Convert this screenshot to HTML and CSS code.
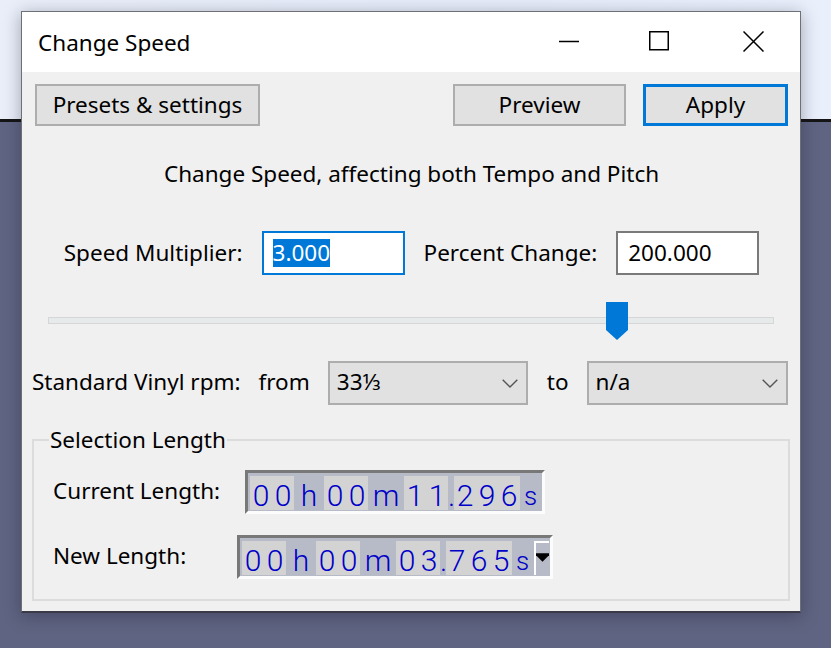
FILE: index.html
```html
<!DOCTYPE html>
<html>
<head>
<meta charset="utf-8">
<link rel="stylesheet" href="styles.css">
</head>
<body>
<div class="desktop">
  <div class="sky"></div>
  <div class="rule"></div>
  <div class="ground"></div>
</div>

<div class="window">
  <div class="titlebar">
    <div class="title">Change Speed</div>
    <div class="caption">
      <div class="cap cap-min"><svg width="20" height="20" viewBox="0 0 20 20"><line x1="0" y1="10.5" x2="20" y2="10.5" stroke="#000" stroke-width="1.5"/></svg></div>
      <div class="cap cap-max"><svg width="20" height="20" viewBox="0 0 20 20"><rect x="0.75" y="0.75" width="18.5" height="18" fill="none" stroke="#000" stroke-width="1.5"/></svg></div>
      <div class="cap cap-close"><svg width="21" height="21" viewBox="0 0 21 21"><path d="M0.5 0.5 L20.5 20.5 M20.5 0.5 L0.5 20.5" stroke="#000" stroke-width="1.5" fill="none"/></svg></div>
    </div>
  </div>

  <div class="client">
    <div class="toolbar">
      <div class="btn btn-presets">Presets &amp; settings</div>
      <div class="btn btn-preview">Preview</div>
      <div class="btn btn-apply">Apply</div>
    </div>

    <div class="heading">Change Speed, affecting both Tempo and Pitch</div>

    <div class="mult-row">
      <span class="lbl">Speed Multiplier:</span>
      <div class="field field-focus"><span class="sel">3.000</span></div>
      <span class="lbl">Percent Change:</span>
      <div class="field">200.000</div>
    </div>

    <div class="slider">
      <div class="track"></div>
      <svg class="thumb" width="22" height="38" viewBox="0 0 22 38"><path d="M0 0 H22 V28 L11 38 L0 28 Z" fill="#0078d7"/></svg>
    </div>

    <div class="vinyl-row">
      <span class="lbl">Standard Vinyl rpm:</span>
      <span class="lbl">from</span>
      <div class="combo combo-from"><span>33⅓</span><svg class="chev" width="16" height="9" viewBox="0 0 16 9"><path d="M0.7 0.7 L8 8 L15.3 0.7" fill="none" stroke="#555" stroke-width="1.4"/></svg></div>
      <span class="lbl">to</span>
      <div class="combo combo-to"><span>n/a</span><svg class="chev" width="16" height="9" viewBox="0 0 16 9"><path d="M0.7 0.7 L8 8 L15.3 0.7" fill="none" stroke="#555" stroke-width="1.4"/></svg></div>
    </div>

    <fieldset class="group">
      <legend>Selection Length</legend>
      <div class="len-row">
        <span class="lbl len-lbl-cur">Current Length:</span>
        <div class="tc">
          <span class="dg2"><span class="d">0</span><span class="d">0</span></span>
          <span class="u u-h">h</span>
          <span class="dg2"><span class="d">0</span><span class="d">0</span></span>
          <span class="u u-m">m</span>
          <span class="dg2"><span class="d">1</span><span class="d">1</span></span>
          <span class="u u-dot">.</span>
          <span class="dg3"><span class="d">2</span><span class="d">9</span><span class="d">6</span></span>
          <span class="u u-s">s</span>
        </div>
      </div>
      <div class="len-row len-row-new">
        <span class="lbl len-lbl-new">New Length:</span>
        <div class="tc">
          <span class="dg2"><span class="d">0</span><span class="d">0</span></span>
          <span class="u u-h">h</span>
          <span class="dg2"><span class="d">0</span><span class="d">0</span></span>
          <span class="u u-m">m</span>
          <span class="dg2"><span class="d">0</span><span class="d">3</span></span>
          <span class="u u-dot">.</span>
          <span class="dg3"><span class="d">7</span><span class="d">6</span><span class="d">5</span></span>
          <span class="u u-s u-s-new">s</span>
          <span class="tc-drop"><svg width="14" height="10" viewBox="0 0 14 10"><path d="M0 0 H14 V2 L7 9 L0 2 Z" fill="#000"/></svg></span>
        </div>
      </div>
    </fieldset>
  </div>
</div>
</body>
</html>
```

FILE: styles.css
```css
html, body {
  margin: 0;
  padding: 0;
  width: 831px;
  height: 648px;
  overflow: hidden;
}

body {
  font-family: "Noto Sans", "Open Sans", sans-serif;
  font-size: 22.5px;
  color: #000;
}

.desktop {
  display: flex;
  flex-direction: column;
  height: 648px;
}

.sky {
  height: 119px;
  background: linear-gradient(90deg, #e9eef9 0%, #e6ecf9 60%, #e9effb 100%);
}

.rule {
  height: 3px;
  background: #151515;
}

.ground {
  flex: 1;
  background: #5f6482;
}

.window {
  position: absolute;
  left: 21px;
  top: 11px;
  width: 778px;
  height: 599px;
  border: 1px solid #6d7077;
  border-bottom: 2px solid #3a3b46;
  background: #f0f0f0;
  box-shadow: 0 3px 16px rgba(20, 22, 40, 0.35);
  display: flex;
  flex-direction: column;
}

/* title bar */
.titlebar {
  height: 60px;
  background: #fff;
  display: flex;
  align-items: center;
}

.title {
  padding-left: 16px;
  padding-top: 1px;
  flex: 1;
  line-height: 30px;
}

.caption {
  display: flex;
  height: 60px;
}

.cap {
  display: flex;
  align-items: center;
  justify-content: center;
  height: 60px;
  padding-bottom: 2px;
  box-sizing: border-box;
}

.cap-min { width: 86px; }
.cap-max { width: 94px; }
.cap-close { width: 94px; }

/* client */
.client {
  flex: 1;
  display: flex;
  flex-direction: column;
  padding: 12px 12px 0 13px;
}

.toolbar {
  display: flex;
  height: 42px;
}

.btn {
  box-sizing: border-box;
  height: 42px;
  background: #e1e1e1;
  border: 2px solid #adadad;
  display: flex;
  align-items: center;
  justify-content: center;
  padding-bottom: 1px;
  line-height: 30px;
}

.btn-presets { width: 225px; margin-right: auto; }
.btn-preview { width: 173px; margin-right: 17px; }
.btn-apply {
  width: 145px;
  border: 3px solid #0078d7;
}

.heading {
  margin-top: 33px;
  line-height: 30px;
  text-align: center;
}

.mult-row {
  margin-top: 42px;
  display: flex;
  align-items: center;
  justify-content: center;
  gap: 19px;
  height: 44px;
}

.lbl {
  line-height: 30px;
  white-space: nowrap;
}

.field {
  box-sizing: border-box;
  width: 143px;
  height: 44px;
  border: 2px solid #7a7a7a;
  background: #fff;
  padding-left: 10px;
  display: flex;
  align-items: center;
  line-height: 30px;
}

.field-focus {
  border-color: #0078d7;
  padding-left: 9px;
}

.sel {
  background: #0078d7;
  color: #fff;
  line-height: 28px;
}

/* slider */
.slider {
  position: relative;
  margin: 27px 14px 0 13px;
  height: 38px;
}

.track {
  margin-top: 15px;
  height: 5px;
  background: #e7eaea;
  border: 1px solid #d6d6d6;
}

.thumb {
  position: absolute;
  left: 558px;
  top: 0;
  display: block;
}

/* vinyl */
.vinyl-row {
  margin: 21px 0 0 -3px;
  display: flex;
  align-items: center;
  height: 44px;
}

.vinyl-row .lbl { margin-right: 18px; padding-bottom: 2px; }

.combo {
  box-sizing: border-box;
  height: 44px;
  background: #e1e1e1;
  border: 2px solid #adadad;
  display: flex;
  align-items: center;
  justify-content: space-between;
  padding: 0 8px 2px 7px;
  margin-right: 19px;
  line-height: 30px;
}

.combo-from { width: 200px; }
.combo-to { flex: 1; margin-right: 0; }

.chev { display: block; margin-top: 2px; }

/* group */
.group {
  margin: 20px 0 0 -3px;
  width: 758px;
  box-sizing: border-box;
  height: 176px;
  border: 2px solid #dcdcdc;
  padding: 0 0 0 19px;
}

.group legend {
  margin-left: -4px;
  padding: 0 1px;
  line-height: 30px;
}

.len-row {
  display: flex;
  align-items: center;
  margin-top: 14px;
  height: 45px;
}

.len-row-new { margin-top: 20px; }

.len-lbl-cur { width: 192px; padding-bottom: 2px; }
.len-lbl-new { width: 184px; padding-bottom: 2px; }

/* time control */
.tc {
  display: flex;
  align-items: stretch;
  background: #b7bbc7;
  border-top: 3px solid #787878;
  border-left: 3px solid #787878;
  border-right: 3px solid #fcfcfc;
  border-bottom: 3px solid #fcfcfc;
  padding: 3px 1px 1px 2px;
  height: 34px;
  font-family: "Roboto", "Liberation Sans", sans-serif;
  font-weight: 300;
  font-size: 30px;
  color: #0000c8;
}

.dg2, .dg3 {
  display: flex;
  background: #d3d3d3;
  height: 34px;
}

.d {
  width: 22px;
  text-align: center;
  line-height: 40px;
  height: 34px;
}

.u {
  height: 34px;
  line-height: 40px;
  text-align: center;
}

.u-h { width: 30px; }
.u-m { width: 36px; }
.u-dot { width: 6px; }
.u-s { width: 21px; font-size: 26px; }
.u-s-new { width: 21px; }

.tc-drop {
  width: 15px;
  margin-left: 1px;
  border-left: 2px solid #fff;
  border-top: 2px solid #fff;
  display: flex;
  justify-content: center;
  align-items: flex-start;
  padding-top: 10px;
  box-sizing: border-box;
  height: 34px;
}

.tc-drop svg { display: block; }
```
